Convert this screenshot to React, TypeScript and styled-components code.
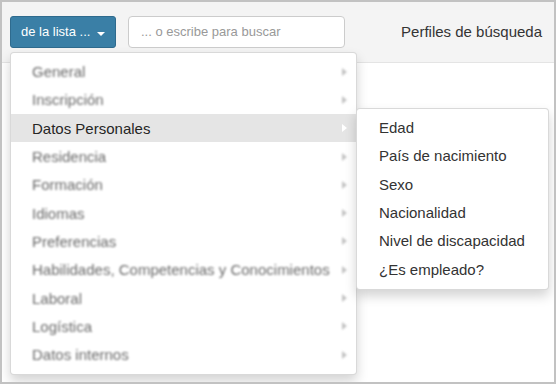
import styled, { createGlobalStyle } from "styled-components";

const GlobalStyle = createGlobalStyle`
  html, body {
    margin: 0;
    padding: 0;
    background: #ffffff;
  }
  body {
    font-family: "Liberation Sans", Arial, sans-serif;
  }
`;

type Category = { label: string; active?: boolean };

const categories: Category[] = [
  { label: "General" },
  { label: "Inscripción" },
  { label: "Datos Personales", active: true },
  { label: "Residencia" },
  { label: "Formación" },
  { label: "Idiomas" },
  { label: "Preferencias" },
  { label: "Habilidades, Competencias y Conocimientos" },
  { label: "Laboral" },
  { label: "Logística" },
  { label: "Datos internos" },
];

const personalFields = [
  "Edad",
  "País de nacimiento",
  "Sexo",
  "Nacionalidad",
  "Nivel de discapacidad",
  "¿Es empleado?",
];

const App = () => {
  return (
    <>
      <GlobalStyle />
      <Frame>
        <Toolbar>
          <DropdownWrap>
            <ListButton type="button">
              de la lista ...
              <Caret />
            </ListButton>
            <Menu>
              {categories.map((cat) => (
                <MenuItem key={cat.label} active={cat.active}>
                  <ItemLabel active={cat.active}>{cat.label}</ItemLabel>
                  <Arrow active={cat.active} />
                  {cat.active && (
                    <SubMenu>
                      {personalFields.map((field) => (
                        <SubItem key={field}>{field}</SubItem>
                      ))}
                    </SubMenu>
                  )}
                </MenuItem>
              ))}
            </Menu>
          </DropdownWrap>
          <SearchInput placeholder="... o escribe para buscar" />
          <Profiles>Perfiles de búsqueda</Profiles>
        </Toolbar>
      </Frame>
    </>
  );
};

export default App;

const Frame = styled.div`
  width: 556px;
  height: 384px;
  box-sizing: border-box;
  border: 2px solid #c2c2c2;
  background: #ffffff;
  overflow: hidden;
`;

const Toolbar = styled.div`
  height: 61px;
  box-sizing: border-box;
  display: flex;
  align-items: center;
  gap: 12px;
  padding: 0 12px 1px 8px;
  background: #f4f4f4;
  border-bottom: 1px solid #e4e4e4;
`;

const DropdownWrap = styled.div`
  position: relative;
`;

const ListButton = styled.button`
  display: flex;
  align-items: center;
  height: 32px;
  width: 106px;
  box-sizing: border-box;
  padding: 0 0 0 10px;
  border: 1px solid #2f6b8e;
  border-radius: 3px;
  background: #3a7fa6;
  color: #ffffff;
  font-family: "Liberation Sans", Arial, sans-serif;
  font-size: 13px;
`;

const Caret = styled.span`
  display: inline-block;
  margin: 5px 0 0 7px;
  width: 0;
  height: 0;
  border-left: 4px solid transparent;
  border-right: 4px solid transparent;
  border-top: 4px solid #ffffff;
`;

const SearchInput = styled.input`
  width: 217px;
  height: 32px;
  box-sizing: border-box;
  padding: 0 12px;
  border: 1px solid #cccccc;
  border-radius: 4px;
  background: #ffffff;
  font-family: "Liberation Sans", Arial, sans-serif;
  font-size: 13px;
  color: #555555;
  outline: none;

  &::placeholder {
    color: #999999;
  }
`;

const Profiles = styled.span`
  margin-left: auto;
  font-size: 15px;
  color: #333333;
`;

const Menu = styled.ul`
  position: absolute;
  top: 36px;
  left: 0;
  z-index: 10;
  width: 347px;
  box-sizing: border-box;
  margin: 0;
  padding: 5px 0;
  list-style: none;
  background: #ffffff;
  border: 1px solid rgba(0, 0, 0, 0.15);
  border-radius: 4px;
  box-shadow: 0 6px 12px rgba(0, 0, 0, 0.175);
`;

const MenuItem = styled.li<{ active?: boolean }>`
  position: relative;
  display: flex;
  align-items: center;
  height: 28.3px;
  padding: 0 9px 0 21px;
  background: ${(p) => (p.active ? "#e5e5e5" : "transparent")};
  font-size: 15px;
`;

const ItemLabel = styled.span<{ active?: boolean }>`
  flex: 1;
  white-space: nowrap;
  color: ${(p) => (p.active ? "#262626" : "#6a6a6a")};
  filter: ${(p) => (p.active ? "none" : "blur(1px)")};
`;

const Arrow = styled.span<{ active?: boolean }>`
  width: 0;
  height: 0;
  border-top: 4px solid transparent;
  border-bottom: 4px solid transparent;
  border-left: 5px solid ${(p) => (p.active ? "#ffffff" : "#c4c4c4")};
  filter: ${(p) => (p.active ? "none" : "blur(0.8px)")};
`;

const SubMenu = styled.ul`
  position: absolute;
  top: -6px;
  left: 100%;
  z-index: 11;
  width: 193px;
  box-sizing: border-box;
  margin: 0;
  padding: 5px 0;
  list-style: none;
  background: #ffffff;
  border: 1px solid rgba(0, 0, 0, 0.15);
  border-radius: 4px;
  box-shadow: 0 6px 12px rgba(0, 0, 0, 0.175);
`;

const SubItem = styled.li`
  height: 28.3px;
  line-height: 28.3px;
  padding: 0 20px 0 22px;
  white-space: nowrap;
  font-size: 15px;
  color: #333333;
`;
